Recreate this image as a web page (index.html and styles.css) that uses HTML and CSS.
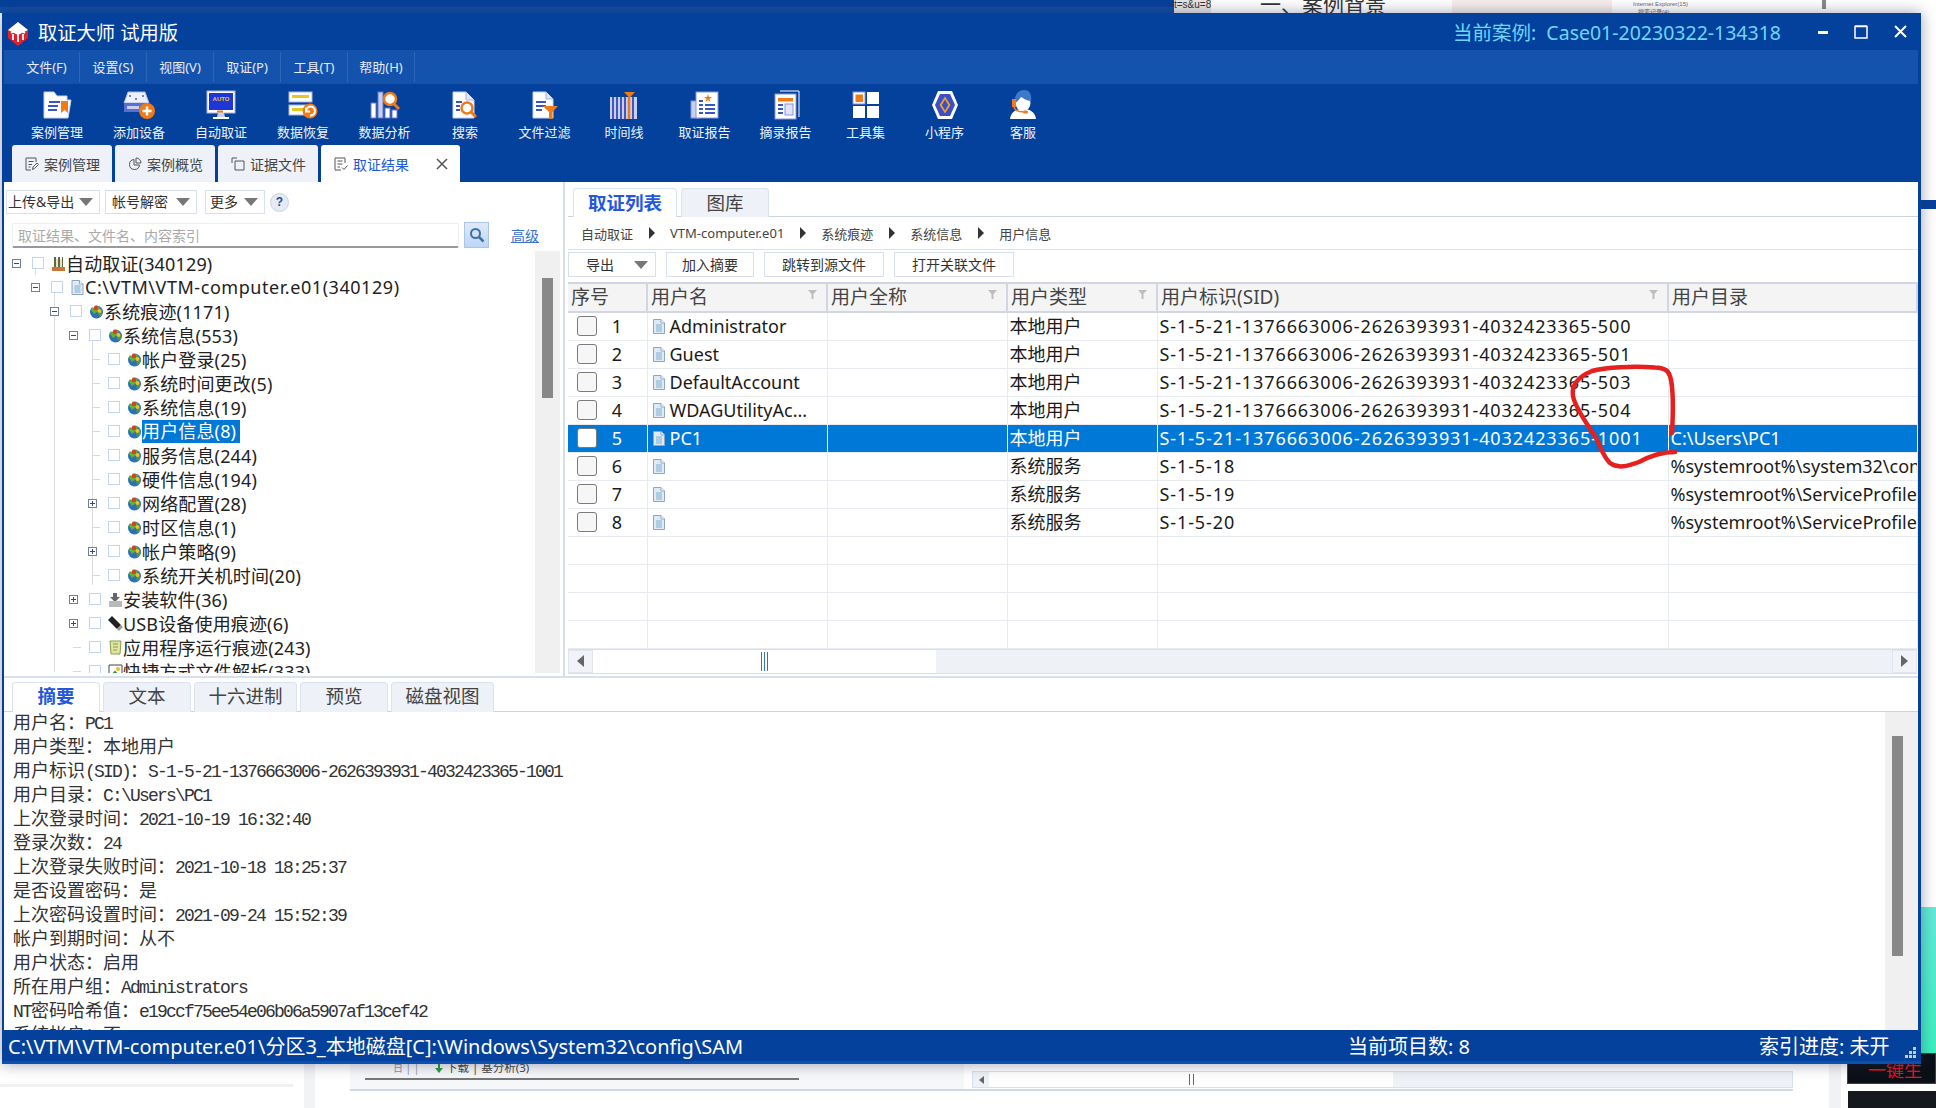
FILE: index.html
```html
<!DOCTYPE html>
<html lang="zh-CN">
<head>
<meta charset="utf-8">
<title>取证大师 试用版</title>
<link rel="stylesheet" href="styles.css">
</head>
<body>
<svg class="defs" width="0" height="0" aria-hidden="true">
  <symbol id="globe" viewBox="0 0 15 15">
    <circle cx="7.5" cy="8" r="6.5" fill="#2f6fb8"/>
    <path d="M2 6 C4 2 8 1 11 3 L9 7 L5 10 Z" fill="#5cb531"/>
    <path d="M9 9 L13 7 L13 11 L10 13 Z" fill="#3fa044"/>
    <circle cx="7" cy="4" r="2.3" fill="#e23a2a"/>
    <circle cx="10.5" cy="7" r="2" fill="#f4c020"/>
    <circle cx="4" cy="2.5" r="1.2" fill="#fff"/>
  </symbol>
  <symbol id="file" viewBox="0 0 12 15">
    <path d="M.5.5H8L11.500 4V14.500H.5Z" fill="#dfeaf6" stroke="#8fa6c2"/>
    <path d="M8 .5V4H11.500" fill="#fff" stroke="#8fa6c2"/>
    <path d="M3 6H9M3 8H9M3 10H9M3 12H9" stroke="#7fb0cf"/>
  </symbol>
  <symbol id="funnel" viewBox="0 0 9 9">
    <path d="M0 0H9L5.500 4V9H3.500V4Z" fill="#bdbdbd"/>
  </symbol>
</svg>

<main class="desktop">
  <div class="bg-blue"></div>
  <div class="bg-url">t=s&amp;u=8</div>
  <div class="bg-heading">一、案例背景</div>
  <div class="bg-pink"></div>
  <div class="bg-tree">Internet Explorer(15)<br>&nbsp;&nbsp;&nbsp;搜索记录(4)</div>
  <div class="bg-sb"></div>
  <div class="bg-tick"></div>
  <div class="bg-grey-bar"></div>
  <div class="bg-vband"></div>
  <div class="bg-panel">
    <span class="bg-cal">日 | |</span>
    <svg class="bg-arrow" width="8" height="9" viewBox="0 0 8 9"><path d="M3 0H5V4H8L4 9L0 4H3Z" fill="#2a9a3a"/></svg>
    <span class="bg-dl">下载 | 基分析(3)</span>
    <span class="bg-line"></span>
  </div>
  <div class="bg-hs"><span class="bg-hs-btn"><i class="tl-sm"></i></span><span class="bg-hs-thumb"><i class="grip-sm"></i></span></div>
  <div class="bg-hs-line"></div>
  <div class="bg-vband2"></div>
  <div class="bg-teal"></div>
  <div class="bg-dark1"><span class="bg-red">一键生</span></div>
  <div class="bg-dark2"></div>

  <section class="window">
    <header class="titlebar">
      <svg class="logo" width="20" height="24" viewBox="0 0 20 24">
        <path d="M10 0 L20 8 V16 L10 24 L0 16 V8Z" fill="#e3202a"/>
        <path d="M10 0 L20 8 L10 13 L0 8Z" fill="#fff"/>
        <path d="M3 11 L10 7 L17 11 M5 12 V18 M10 10 V20 M15 12 V18" stroke="#fff" stroke-width="1.800" fill="none"/>
      </svg>
      <span class="app-name">取证大师 试用版</span>
      <span class="case-name">当前案例:&nbsp;&nbsp;Case01-20230322-134318</span>
      <span class="win-btns">
        <svg width="10" height="4" viewBox="0 0 10 4"><rect width="10" height="3" y="1" fill="#fff"/></svg>
        <svg width="14" height="14" viewBox="0 0 14 14"><path d="M1 1.500H13V13H1Z M1 1H13" fill="none" stroke="#fff" stroke-width="1.500"/></svg>
        <svg width="13" height="13" viewBox="0 0 13 13"><path d="M1 1L12 12M12 1L1 12" stroke="#fff" stroke-width="2"/></svg>
      </span>
    </header>

    <nav class="menubar">
      <span class="menu-item first">文件(F)</span>
      <span class="menu-item">设置(S)</span>
      <span class="menu-item">视图(V)</span>
      <span class="menu-item">取证(P)</span>
      <span class="menu-item">工具(T)</span>
      <span class="menu-item">帮助(H)</span>
    </nav>

    <div class="toolbar">
      <div class="tool">
        <svg width="32" height="28" viewBox="0 0 32 28"><path d="M3 1H13L16 5H26V9H30L27 27H3Z" fill="#fff" stroke="#c7d0f0"/><path d="M8 11H19M7 15H17M7 19H16" stroke="#3a55c8" stroke-width="2"/><path d="M20 10H27V22L23.500 19L20 22Z" fill="#f47a14"/></svg>
        <span>案例管理</span>
      </div>
      <div class="tool">
        <svg width="32" height="28" viewBox="0 0 32 28"><path d="M5 1H22L26 12H1Z" fill="#eef1fa" stroke="#aab4e0"/><circle cx="7" cy="5" r="1" fill="#4a5cc8"/><circle cx="20" cy="5" r="1" fill="#4a5cc8"/><circle cx="13" cy="8" r="1" fill="#4a5cc8"/><rect x="1" y="12" width="25" height="9" fill="#5b6fd0"/><rect x="4" y="15" width="12" height="3" fill="#c7d0f0"/><circle cx="24" cy="20" r="8" fill="#f07a18"/><path d="M24 15.500V24.500M19.500 20H28.500" stroke="#fff" stroke-width="2.500"/></svg>
        <span>添加设备</span>
      </div>
      <div class="tool">
        <svg width="32" height="30" viewBox="0 0 32 30"><rect x="2" y="1" width="28" height="22" fill="#fff" stroke="#aab4e0"/><rect x="4" y="3" width="24" height="17" fill="#1e35d8"/><text class="auto" x="16" y="11">AUTO</text><rect x="12" y="20.500" width="6" height="2" fill="#f07a18"/><path d="M13 23H19L20 27H12Z" fill="#c7d0f0"/><rect x="8" y="27" width="16" height="2" fill="#fff"/></svg>
        <span>自动取证</span>
      </div>
      <div class="tool">
        <svg width="32" height="28" viewBox="0 0 32 28"><rect x="2" y="1" width="23" height="10" fill="#fff" stroke="#aab4e0"/><rect x="5" y="4" width="17" height="3" fill="#e8c820"/><rect x="2" y="14" width="23" height="10" fill="#fff" stroke="#aab4e0"/><rect x="5" y="17" width="12" height="3" fill="#e8c820"/><circle cx="23" cy="20" r="7.500" fill="#f07a18"/><path d="M19 20 A4.500 4.500 0 1 1 23 24.500 M19 16.500V20.500H23" stroke="#fff" stroke-width="2" fill="none"/></svg>
        <span>数据恢复</span>
      </div>
      <div class="tool">
        <svg width="32" height="28" viewBox="0 0 32 28"><rect x="2" y="12" width="5" height="15" fill="#fff" stroke="#6a78d0"/><rect x="9" y="1" width="5" height="26" fill="#c7d0f0" stroke="#6a78d0"/><rect x="16" y="17" width="5" height="10" fill="#fff" stroke="#6a78d0"/><rect x="23" y="19" width="5" height="8" fill="#fff" stroke="#6a78d0"/><circle cx="21" cy="8" r="6" fill="#fff" stroke="#f07a18" stroke-width="2.500"/><path d="M25 13L30 18" stroke="#f07a18" stroke-width="3"/></svg>
        <span>数据分析</span>
      </div>
      <div class="tool">
        <svg width="32" height="28" viewBox="0 0 32 28"><path d="M4 1H17L25 9V27H4Z" fill="#fff" stroke="#c7d0f0"/><path d="M17 1V9H25" fill="#dfe4f8" stroke="#aab4e0"/><path d="M7 11H13M7 15H11M7 19H11" stroke="#3a55c8" stroke-width="2"/><circle cx="18" cy="17" r="5.500" fill="#fff" stroke="#f07a18" stroke-width="2.500"/><path d="M22 21L27 26" stroke="#f07a18" stroke-width="3"/></svg>
        <span>搜索</span>
      </div>
      <div class="tool">
        <svg width="32" height="28" viewBox="0 0 32 28"><path d="M4 1H17L24 8V27H4Z" fill="#fff" stroke="#c7d0f0"/><path d="M17 1V8H24" fill="#dfe4f8" stroke="#aab4e0"/><path d="M7 11H17M7 15H17M7 19H13" stroke="#3a55c8" stroke-width="2"/><path d="M14 15H29L23.500 21V28H20V21Z" fill="#f07a18"/></svg>
        <span>文件过滤</span>
      </div>
      <div class="tool">
        <svg width="32" height="28" viewBox="0 0 32 28"><rect x="2" y="6" width="27" height="22" fill="#c7d0f0"/><path d="M5 6V28M9 6V28M13 6V28M17 6V28M25 6V28" stroke="#4455c0" stroke-width="2"/><path d="M21 6V28" stroke="#f07a18" stroke-width="2.500"/><path d="M16 1H27L21.500 7Z" fill="#f07a18"/></svg>
        <span>时间线</span>
      </div>
      <div class="tool">
        <svg width="32" height="28" viewBox="0 0 32 28"><rect x="2" y="10" width="8" height="17" fill="#c7d0f0" stroke="#8a96d8"/><rect x="7" y="1" width="22" height="26" fill="#fff" stroke="#8a96d8"/><path d="M19 3L20 6H23L20.500 8L21.500 11L19 9L16.500 11L17.500 8L15 6H18Z" fill="#f07a18"/><path d="M10 10H14M10 14H14M10 18H14M10 22H14M16 14H26M16 18H26M16 22H26" stroke="#3a55c8" stroke-width="2"/></svg>
        <span>取证报告</span>
      </div>
      <div class="tool">
        <svg width="32" height="30" viewBox="0 0 32 30"><path d="M10 1H29V27" fill="none" stroke="#fff"/><rect x="5" y="4" width="21" height="25" fill="#fff" stroke="#8a96d8"/><rect x="8" y="8" width="15" height="3.500" fill="#f07a18"/><path d="M8 15H13M8 19H13M8 23H13" stroke="#3a55c8" stroke-width="2"/><rect x="15" y="14" width="8" height="11" fill="#dfe4f8" stroke="#8a96d8"/></svg>
        <span>摘录报告</span>
      </div>
      <div class="tool">
        <svg width="28" height="28" viewBox="0 0 28 28"><rect x="1" y="1" width="12" height="12" fill="#fff" stroke="#8a96d8"/><rect x="3.500" y="3.500" width="7.500" height="7.500" fill="#f07a18"/><rect x="15" y="1" width="12" height="12" fill="#fff"/><rect x="1" y="15" width="12" height="12" fill="#fff"/><rect x="15" y="15" width="12" height="12" fill="#fff"/></svg>
        <span>工具集</span>
      </div>
      <div class="tool">
        <svg width="28" height="30" viewBox="0 0 28 30"><path d="M7 1H21L27 15L21 29H7L1 15Z" fill="#fff"/><path d="M9 4H19L24 15L19 26H9L4 15Z" fill="#3a4fc8"/><path d="M14 8L18.500 15L14 22L9.500 15Z" fill="none" stroke="#f5a020" stroke-width="1.600"/><path d="M12 11.500L10 15L12 18.500M16 11.500L18 15L16 18.500" fill="none" stroke="#f5a020" stroke-width="1.200"/></svg>
        <span>小程序</span>
      </div>
      <div class="tool">
        <svg width="28" height="30" viewBox="0 0 28 30"><path d="M1 29C2 22 7 19 14 19C21 19 26 22 27 29Z" fill="#fff"/><ellipse cx="14" cy="13" rx="7.500" ry="8" fill="#fff"/><path d="M6 13C5 4 10 0 15 0C21 0 23 5 22 11C18 11 14 8 12 7C10 10 8 12 6 13Z" fill="#3f78c8"/><rect x="3" y="9" width="4" height="8" fill="#f07a18"/><path d="M5 17C6 21 10 22 15 22" stroke="#f07a18" stroke-width="1.500" fill="none"/><rect x="14" y="20.500" width="5" height="3" rx="1.500" fill="#f07a18"/></svg>
        <span>客服</span>
      </div>
    </div>

    <div class="tabbar">
      <span class="top-tab">
        <svg width="14" height="14" viewBox="0 0 14 14"><path d="M11 5V1H1V13H6M3.500 4.500H8.500M3.500 7.500H7M3.500 10H5.500M7.500 12.500L8 10L12 6L13.500 7.500L9.500 11.500Z" fill="none" stroke="#555"/></svg>
        案例管理
      </span>
      <span class="top-tab">
        <svg width="14" height="14" viewBox="0 0 14 14"><path d="M6 2.500A5 5 0 1 0 11.500 8H6Z M8 1A5 5 0 0 1 13 6H8Z" fill="none" stroke="#555"/></svg>
        案例概览
      </span>
      <span class="top-tab">
        <svg width="14" height="14" viewBox="0 0 14 14"><path d="M1 6V1H6M4 4H13V13H4Z" fill="none" stroke="#555"/></svg>
        证据文件
      </span>
      <span class="top-tab active">
        <svg width="14" height="14" viewBox="0 0 14 14"><path d="M7 13H1V1H11V6M3.500 4H8.500M3.500 7H8.500M3.500 10H6M8 10.500L10 12.500L13.500 8.500" fill="none" stroke="#555"/></svg>
        <span class="tab-label">取证结果</span>
        <svg class="tab-close" width="12" height="12" viewBox="0 0 12 12"><path d="M1 1L11 11M11 1L1 11" stroke="#555" stroke-width="1.500"/></svg>
      </span>
    </div>

    <div class="main">
      <aside class="left">
        <div class="left-tools">
          <span class="drop w1">上传&amp;导出<i class="tri"></i></span>
          <span class="drop w2">帐号解密<i class="tri"></i></span>
          <span class="drop w3">更多<i class="tri"></i></span>
          <span class="help">?</span>
        </div>
        <div class="search-row">
          <span class="search-input">取证结果、文件名、内容索引</span>
          <span class="search-btn">
            <svg width="16" height="16" viewBox="0 0 16 16"><circle cx="6.500" cy="6.500" r="4.500" fill="none" stroke="#3f6fa8" stroke-width="2"/><path d="M10 10L14.500 14.500" stroke="#3f6fa8" stroke-width="2.500"/></svg>
          </span>
          <span class="adv">高级</span>
        </div>
        <div class="tree-wrap">
          <div class="tree">
            <i class="guide g1"></i><i class="guide g2"></i><i class="guide g3"></i><i class="guide g4"></i>
            <div class="node l0"><i class="exp minus"></i><i class="chk"></i>
              <svg class="nico" width="15" height="15" viewBox="0 0 15 15"><path d="M1 11H14V15H1Z" fill="#c8763a"/><path d="M3 1H5V11H3ZM7 1H9V11H7ZM11 1H12V11H11Z" fill="#5d6b3a"/><path d="M5 3H7V11H5ZM9 3H11V11H9Z" fill="#e8e4c8"/></svg>
              <span>自动取证(340129)</span></div>
            <div class="node l1"><i class="exp minus"></i><i class="chk"></i>
              <svg class="nico"><use href="#file"/></svg>
              <span class="wide">C:\VTM\VTM-computer.e01(340129)</span></div>
            <div class="node l2"><i class="exp minus"></i><i class="chk"></i>
              <svg class="nico"><use href="#globe"/></svg>
              <span>系统痕迹(1171)</span></div>
            <div class="node l3"><i class="exp minus"></i><i class="chk"></i>
              <svg class="nico"><use href="#globe"/></svg>
              <span>系统信息(553)</span></div>
            <div class="node l4"><i class="exp leaf"></i><i class="chk"></i>
              <svg class="nico"><use href="#globe"/></svg>
              <span>帐户登录(25)</span></div>
            <div class="node l4"><i class="exp leaf"></i><i class="chk"></i>
              <svg class="nico"><use href="#globe"/></svg>
              <span>系统时间更改(5)</span></div>
            <div class="node l4"><i class="exp leaf"></i><i class="chk"></i>
              <svg class="nico"><use href="#globe"/></svg>
              <span>系统信息(19)</span></div>
            <div class="node l4"><i class="exp leaf"></i><i class="chk"></i>
              <svg class="nico"><use href="#globe"/></svg>
              <span class="sel">用户信息(8)</span></div>
            <div class="node l4"><i class="exp leaf"></i><i class="chk"></i>
              <svg class="nico"><use href="#globe"/></svg>
              <span>服务信息(244)</span></div>
            <div class="node l4"><i class="exp leaf"></i><i class="chk"></i>
              <svg class="nico"><use href="#globe"/></svg>
              <span>硬件信息(194)</span></div>
            <div class="node l4"><i class="exp plus"></i><i class="chk"></i>
              <svg class="nico"><use href="#globe"/></svg>
              <span>网络配置(28)</span></div>
            <div class="node l4"><i class="exp leaf"></i><i class="chk"></i>
              <svg class="nico"><use href="#globe"/></svg>
              <span>时区信息(1)</span></div>
            <div class="node l4"><i class="exp plus"></i><i class="chk"></i>
              <svg class="nico"><use href="#globe"/></svg>
              <span>帐户策略(9)</span></div>
            <div class="node l4"><i class="exp leaf"></i><i class="chk"></i>
              <svg class="nico"><use href="#globe"/></svg>
              <span>系统开关机时间(20)</span></div>
            <div class="node l3"><i class="exp plus"></i><i class="chk"></i>
              <svg class="nico" width="15" height="15" viewBox="0 0 15 15"><path d="M5 1H9V5H12L7 10L2 5H5Z" fill="#666"/><path d="M1 9H14V15H1Z" fill="#b9b9b9"/></svg>
              <span>安装软件(36)</span></div>
            <div class="node l3"><i class="exp plus"></i><i class="chk"></i>
              <svg class="nico" width="15" height="15" viewBox="0 0 15 15"><path d="M0 4L4 0L13 9L9 13Z" fill="#222"/><path d="M9 13L13 9L15 11L11 15Z" fill="#999"/></svg>
              <span>USB设备使用痕迹(6)</span></div>
            <div class="node l3"><i class="exp leaf"></i><i class="chk"></i>
              <svg class="nico" width="15" height="15" viewBox="0 0 15 15"><path d="M2 1H13L12 14H3Z" fill="#dfe6a0" stroke="#8a9a50"/><path d="M5 4H10M5 7H10M5 10H9" stroke="#8a9a50"/></svg>
              <span>应用程序运行痕迹(243)</span></div>
            <div class="node l3"><i class="exp leaf"></i><i class="chk"></i>
              <svg class="nico" width="15" height="15" viewBox="0 0 15 15"><path d="M1 1H14V14H1Z" fill="#fff" stroke="#444"/><path d="M3 12L7 8L10 11" stroke="#3a9a3a" stroke-width="2" fill="none"/><circle cx="10" cy="5" r="2" fill="#e8c020"/></svg>
              <span>快捷方式文件解析(333)</span></div>
          </div>
          <div class="vscroll"><i class="vthumb"></i></div>
        </div>
      </aside>

      <section class="right">
        <div class="sub-tabs">
          <span class="sub-tab active">取证列表</span>
          <span class="sub-tab">图库</span>
        </div>
        <div class="crumbs">
          <span>自动取证</span><i class="arrow"></i>
          <span>VTM-computer.e01</span><i class="arrow"></i>
          <span>系统痕迹</span><i class="arrow"></i>
          <span>系统信息</span><i class="arrow"></i>
          <span>用户信息</span>
        </div>
        <div class="actions">
          <span class="act export">导出<i class="tri"></i></span>
          <span class="act a2">加入摘要</span>
          <span class="act a3">跳转到源文件</span>
          <span class="act a3">打开关联文件</span>
        </div>
        <table class="grid">
          <colgroup><col class="c1"><col class="c2"><col class="c3"><col class="c4"><col class="c5"><col class="c6"></colgroup>
          <thead>
            <tr>
              <th>序号</th>
              <th><div class="th-in">用户名<svg width="9" height="9"><use href="#funnel"/></svg></div></th>
              <th><div class="th-in">用户全称<svg width="9" height="9"><use href="#funnel"/></svg></div></th>
              <th><div class="th-in">用户类型<svg width="9" height="9"><use href="#funnel"/></svg></div></th>
              <th><div class="th-in">用户标识(SID)<svg width="9" height="9"><use href="#funnel"/></svg></div></th>
              <th>用户目录</th>
            </tr>
          </thead>
          <tbody>
            <tr><td><div class="idx"><i class="rowchk"></i><b>1</b></div></td><td><div class="name"><svg width="12" height="15"><use href="#file"/></svg>Administrator</div></td><td></td><td>本地用户</td><td class="sid">S-1-5-21-1376663006-2626393931-4032423365-500</td><td></td></tr>
            <tr><td><div class="idx"><i class="rowchk"></i><b>2</b></div></td><td><div class="name"><svg width="12" height="15"><use href="#file"/></svg>Guest</div></td><td></td><td>本地用户</td><td class="sid">S-1-5-21-1376663006-2626393931-4032423365-501</td><td></td></tr>
            <tr><td><div class="idx"><i class="rowchk"></i><b>3</b></div></td><td><div class="name"><svg width="12" height="15"><use href="#file"/></svg>DefaultAccount</div></td><td></td><td>本地用户</td><td class="sid">S-1-5-21-1376663006-2626393931-4032423365-503</td><td></td></tr>
            <tr><td><div class="idx"><i class="rowchk"></i><b>4</b></div></td><td><div class="name"><svg width="12" height="15"><use href="#file"/></svg>WDAGUtilityAc...</div></td><td></td><td>本地用户</td><td class="sid">S-1-5-21-1376663006-2626393931-4032423365-504</td><td></td></tr>
            <tr class="picked"><td><div class="idx"><i class="rowchk"></i><b>5</b></div></td><td><div class="name"><svg width="12" height="15"><use href="#file"/></svg>PC1</div></td><td></td><td>本地用户</td><td class="sid">S-1-5-21-1376663006-2626393931-4032423365-1001</td><td>C:\Users\PC1</td></tr>
            <tr><td><div class="idx"><i class="rowchk"></i><b>6</b></div></td><td><div class="name"><svg width="12" height="15"><use href="#file"/></svg></div></td><td></td><td>系统服务</td><td class="sid">S-1-5-18</td><td>%systemroot%\system32\config\systemprofile</td></tr>
            <tr><td><div class="idx"><i class="rowchk"></i><b>7</b></div></td><td><div class="name"><svg width="12" height="15"><use href="#file"/></svg></div></td><td></td><td>系统服务</td><td class="sid">S-1-5-19</td><td>%systemroot%\ServiceProfiles\LocalService</td></tr>
            <tr><td><div class="idx"><i class="rowchk"></i><b>8</b></div></td><td><div class="name"><svg width="12" height="15"><use href="#file"/></svg></div></td><td></td><td>系统服务</td><td class="sid">S-1-5-20</td><td>%systemroot%\ServiceProfiles\NetworkService</td></tr>
            <tr><td></td><td></td><td></td><td></td><td></td><td></td></tr>
            <tr><td></td><td></td><td></td><td></td><td></td><td></td></tr>
            <tr><td></td><td></td><td></td><td></td><td></td><td></td></tr>
            <tr><td></td><td></td><td></td><td></td><td></td><td></td></tr>
          </tbody>
        </table>
        <div class="hscroll">
          <span class="hbtn"><i class="tl"></i></span>
          <span class="hthumb"><i class="grip"></i></span>
          <span class="htrack"></span>
          <span class="hbtn"><i class="tr"></i></span>
        </div>
      </section>
    </div>

    <div class="bottom">
      <div class="btm-tabs">
        <span class="btm-tab t1 active">摘要</span>
        <span class="btm-tab t1">文本</span>
        <span class="btm-tab t2">十六进制</span>
        <span class="btm-tab t1">预览</span>
        <span class="btm-tab t2">磁盘视图</span>
      </div>
      <div class="btm-body">
        <div class="summary">
          <div>用户名：<span class="lat">PC1</span></div>
          <div>用户类型：本地用户</div>
          <div>用户标识<span class="lat">(SID)</span>：<span class="lat">S-1-5-21-1376663006-2626393931-4032423365-1001</span></div>
          <div>用户目录：<span class="lat">C:\Users\PC1</span></div>
          <div>上次登录时间：<span class="lat">2021-10-19 16:32:40</span></div>
          <div>登录次数：<span class="lat">24</span></div>
          <div>上次登录失败时间：<span class="lat">2021-10-18 18:25:37</span></div>
          <div>是否设置密码：是</div>
          <div>上次密码设置时间：<span class="lat">2021-09-24 15:52:39</span></div>
          <div>帐户到期时间：从不</div>
          <div>用户状态：启用</div>
          <div>所在用户组：<span class="lat">Administrators</span></div>
          <div><span class="lat">NT</span>密码哈希值：<span class="lat">e19ccf75ee54e06b06a5907af13cef42</span></div>
          <div>系统帐户：否</div>
        </div>
        <div class="btm-scroll"><i class="btm-thumb"></i></div>
      </div>
    </div>

    <footer class="status">
      <span class="st-path">C:\VTM\VTM-computer.e01\分区3_本地磁盘[C]:\Windows\System32\config\SAM</span>
      <span class="st-count">当前项目数: 8</span>
      <span class="st-index">索引进度: 未开始</span>
      <span class="st-grip">
        <i></i><i></i><i></i><i></i><i></i><i></i>
      </span>
    </footer>
  </section>

  <svg class="scribble" width="130" height="115" viewBox="0 0 130 115">
    <path d="M112 73C113 55 114 35 111 20C109 10 105 8 95 7.500C75 6 45 7 32 11C20 16 11 24 13 36C15 48 28 65 36 78C41 88 44 98 50 103C58 109 68 106 79 102C90 96 100 92 115 92" fill="none" stroke="#e6201f" stroke-width="4.500" stroke-linecap="round"/>
  </svg>
</main>
</body>
</html>
```

FILE: styles.css
```css
* { box-sizing: border-box; }
html, body { margin: 0; padding: 0; background: #fff; }
body { font-family: "Noto Sans", "Noto Sans CJK SC", sans-serif; color: #222; overflow: hidden; }
i { display: block; font-style: normal; }
.defs { position: absolute; }

.desktop { position: relative; width: 1936px; height: 1108px; overflow: hidden; background: #fff; }

/* other windows showing behind the app */
.bg-blue { position: absolute; left: 0; top: 0; width: 1174px; height: 13px; background: linear-gradient(#07409a 0, #07409a 7px, #0e4ca6 7px, #0e4ca6 13px); }
.bg-url { position: absolute; left: 1174px; top: 0; width: 37px; height: 13px; background: #e6e6e6; font: 10px/9px "Liberation Sans", sans-serif; color: #333; overflow: hidden; }
.bg-heading { position: absolute; left: 1260px; top: -7px; font-size: 21px; line-height: 22px; color: #333; white-space: nowrap; }
.bg-pink { position: absolute; left: 1452px; top: 0; width: 160px; height: 13px; background: #f6eeeb; }
.bg-tree { position: absolute; left: 1633px; top: 0; font: 6px/8px "Liberation Sans", "Noto Sans CJK SC", sans-serif; color: #667; height: 13px; overflow: hidden; }
.bg-sb { position: absolute; left: 1822px; top: 0; width: 4px; height: 9px; background: #888; }
.bg-tick { position: absolute; left: 1921px; top: 200px; width: 15px; height: 9px; background: #07409a; }
.bg-grey-bar { position: absolute; left: 0; top: 1084px; width: 293px; height: 3px; background: #f0f0f0; }
.bg-vband { position: absolute; left: 304px; top: 1064px; width: 11px; height: 44px; background: #f2f3f5; }
.bg-panel { position: absolute; left: 350px; top: 1064px; width: 614px; height: 26px; background: #f6f7f9; }
.bg-cal { position: absolute; left: 43px; top: -2px; font-size: 10px; line-height: 12px; color: #8a94a8; white-space: nowrap; }
.bg-arrow { position: absolute; left: 85px; top: 0; }
.bg-dl { position: absolute; left: 96px; top: -2px; font-size: 11.500px; line-height: 12px; color: #444; white-space: nowrap; }
.bg-line { position: absolute; left: 15px; top: 14px; width: 434px; height: 2px; background: #777; display: block; }
.bg-hs { position: absolute; left: 972px; top: 1071px; width: 821px; height: 17px; background: #eef1f6; border: 1px solid #d8e0f0; display: flex; }
.bg-hs-btn { width: 16px; display: flex; align-items: center; justify-content: center; }
.tl-sm { width: 0; height: 0; border-top: 4px solid transparent; border-bottom: 4px solid transparent; border-right: 5px solid #666; }
.bg-hs-thumb { width: 404px; height: 15px; background: #fff; display: flex; align-items: center; justify-content: center; }
.grip-sm { width: 5px; height: 11px; border-left: 1px solid #3a70c0; border-right: 1px solid #3a70c0; }
.bg-hs-line { position: absolute; left: 350px; top: 1089px; width: 1443px; height: 2px; background: #d0d8e8; }
.bg-vband2 { position: absolute; left: 1829px; top: 1064px; width: 12px; height: 44px; background: #f1f2f4; }
.bg-teal { position: absolute; left: 1921px; top: 907px; width: 15px; height: 148px; background: linear-gradient(#62ead8, #3cf0c0); }
.bg-dark1 { position: absolute; left: 1847px; top: 1053px; width: 89px; height: 31px; background: #0b0f16; border: 1px solid #b0101a; overflow: hidden; }
.bg-red { position: absolute; left: 20px; top: 5px; color: #f01020; font-size: 18px; line-height: 22px; white-space: nowrap; }
.bg-dark2 { position: absolute; left: 1848px; top: 1091px; width: 88px; height: 17px; background: #15181c; }

/* app window */
.window { position: absolute; left: 2px; top: 13px; width: 1919px; height: 1051px; background: #03419d; display: flex; flex-direction: column; box-shadow: 0 0 14px rgba(40, 50, 80, .45); }

.titlebar { height: 37px; display: flex; align-items: center; color: #fff; padding-left: 6px; }
.logo { margin-right: 10px; margin-top: 4px; }
.app-name { font-size: 19.300px; }
.case-name { margin-left: auto; font-size: 19.500px; color: #6fd6fb; }
.win-btns { display: flex; align-items: center; width: 140px; padding-left: 37px; gap: 26px; }

.menubar { height: 34px; margin: 0 3px 0 2px; background: #1453ad; display: flex; align-items: center; }
.menu-item { width: 67px; height: 30px; line-height: 30px; font-size: 13px; color: #e4ecf8; text-align: center; border-right: 1px solid #2c66b8; }
.menu-item.first { width: 76px; padding-left: 10px; }

.toolbar { height: 61px; padding-left: 14px; padding-top: 6px; display: grid; grid-template-columns: 82px 82px 82px 82px 81px 80px 79px 80px 81px 81px 79px 79px 78px; justify-content: start; }
.tool { display: flex; flex-direction: column; align-items: center; color: #eef3fb; font-size: 13px; line-height: 18px; }
.tool svg { height: 30px; flex: none; margin-bottom: 3px; }
.auto { font: bold 6px "Liberation Sans", sans-serif; fill: #f0d020; text-anchor: middle; }

.tabbar { height: 37px; padding-left: 10px; display: flex; gap: 3px; align-items: flex-end; }
.top-tab { width: 100px; height: 37px; background: #eef1f7; border-radius: 3px 3px 0 0; display: flex; align-items: center; gap: 5px; padding-left: 13px; font-size: 14px; color: #444; }
.top-tab.active { width: 139px; background: #fff; padding-right: 10px; }
.tab-label { color: #2458dc; }
.tab-close { margin-left: auto; margin-right: 2px; }

.main { height: 496px; margin: 0 3px 0 2px; background: #fff; display: flex; border-bottom: 2px solid #d8e0f0; border-top: 0; }

.left { width: 558px; flex: none; display: flex; flex-direction: column; }
.left-tools { display: flex; align-items: center; gap: 5px; padding: 8px 0 0 2px; height: 32px; }
.drop { height: 24px; border: 1px solid #d4dff0; font-size: 14px; line-height: 22px; color: #333; padding-left: 1px; display: flex; align-items: center; justify-content: space-between; padding-right: 6px; }
.drop.w1 { width: 94px; }
.drop.w2 { width: 92px; padding-left: 6px; margin-left: 0; }
.drop.w3 { width: 60px; padding-left: 4px; margin-left: 3px; }
.tri { width: 0; height: 0; border-left: 7px solid transparent; border-right: 7px solid transparent; border-top: 8px solid #777; }
.help { width: 19px; height: 19px; border-radius: 50%; background: #e4ebf6; border: 1px solid #c6d2e6; font: bold 12px/17px "Liberation Sans", sans-serif; text-align: center; color: #2a4a90; }
.search-row { display: flex; align-items: center; padding-left: 8px; margin-top: 8px; height: 26px; }
.search-input { width: 447px; height: 25px; border: 1px solid #eee; border-bottom: 2px solid #999; border-radius: 2px; font-size: 14px; line-height: 23px; padding-left: 5px; color: #aaa; }
.search-btn { width: 25px; height: 26px; margin-left: 5px; background: linear-gradient(#dfeafa, #bdd6f5); border: 1px solid #a9c6ea; display: flex; align-items: center; justify-content: center; }
.adv { margin-left: 22px; font-size: 14px; color: #3a70cc; text-decoration: underline; }

.tree-wrap { display: flex; margin-top: 3px; height: 423px; }
.tree { position: relative; width: 531px; height: 422px; overflow: hidden; }
.node { height: 24px; display: flex; align-items: center; font-size: 18px; white-space: nowrap; color: #222; position: relative; }
.node span { letter-spacing: .15px; }
.node .wide { letter-spacing: .55px; }
.l0 { padding-left: 8px; }
.l1 { padding-left: 27px; }
.l2 { padding-left: 46px; }
.l3 { padding-left: 65px; }
.l4 { padding-left: 84px; }
.exp { width: 9px; height: 9px; flex: none; margin-right: 11px; position: relative; border: 1px solid #6f7f9f; background: #fff; }
.exp::before { content: ""; position: absolute; left: 1px; top: 3px; width: 5px; height: 1px; background: #33477a; }
.exp.plus::after { content: ""; position: absolute; left: 3px; top: 1px; width: 1px; height: 5px; background: #33477a; }
.exp.leaf { border: 0; height: 1px; background: transparent; }
.exp.leaf::before { left: 4px; top: 0; width: 8px; background: #d8d8d8; }
.chk { width: 12px; height: 12px; flex: none; border: 1px solid #c4d4f4; background: #fff; margin-right: 7px; }
.nico { width: 15px; height: 15px; flex: none; margin-right: 0; }
.sel { background: #0078d7; color: #fff; height: 23px; line-height: 23px; padding-right: 4px; }
.guide { position: absolute; width: 1px; background: #dcdcdc; }
.g1 { left: 31px; top: 12px; height: 12px; }
.g2 { left: 50px; top: 36px; height: 12px; }
.g3 { left: 50px; top: 48px; height: 373px; }
.g4 { left: 88px; top: 84px; height: 250px; }
.vscroll { width: 25px; margin-left: 0; height: 422px; background: #f0f0f0; padding: 27px 7px 0; }
.vthumb { width: 11px; height: 120px; background: #888; }

.right { flex: 1; min-width: 0; border-left: 2px solid #d6dff0; margin-left: 1px; padding-left: 3px; }
.sub-tabs { display: flex; gap: 4px; padding: 6px 0 0 5px; height: 35px; border-bottom: 1px solid #ccd2e0; }
.sub-tab { height: 29px; width: 88px; background: #eef1f7; border: 1px solid #dbe2f0; border-bottom: 0; border-radius: 4px 4px 0 0; text-align: center; font-size: 18.500px; line-height: 27px; color: #444; }
.sub-tab.active { width: 104px; background: #fff; color: #2458dc; font-weight: 700; }
.crumbs { height: 33px; display: flex; align-items: center; gap: 14px; padding-left: 13px; font-size: 13px; color: #444; border-bottom: 1px solid #d9e2f0; white-space: nowrap; }
.arrow { width: 0; height: 0; border-top: 6px solid transparent; border-bottom: 6px solid transparent; border-left: 6px solid #333; margin: 0 1px 0 2px; }
.actions { display: flex; gap: 10px; padding-top: 2px; height: 27px; font-size: 14px; color: #333; }
.act { height: 25px; border: 1px solid #d6e0f0; display: flex; align-items: center; justify-content: center; line-height: 23px; }
.act.export { width: 88px; justify-content: space-between; padding: 0 7px 0 17px; }
.act.a2 { width: 88px; }
.act.a3 { width: 120px; }

.grid { margin-top: 5px; width: 1349px; table-layout: fixed; border-collapse: collapse; font-size: 18px; }
.c1 { width: 79px; }
.c2 { width: 180px; }
.c3 { width: 180px; }
.c4 { width: 150px; }
.c5 { width: 511px; }
.c6 { width: 249px; }
.grid th { height: 29px; background: #f4f4f4; border-top: 2px solid #d2d6e2; border-bottom: 2px solid #d2d6e2; border-right: 2px solid #d2d6e2; font-weight: 400; font-size: 19px; text-align: left; padding: 0 0 1px 3px; color: #444; white-space: nowrap; overflow: hidden; line-height: 22px; }
.th-in { display: flex; align-items: center; justify-content: space-between; padding-right: 9px; }
.th-in svg { margin-top: -6px; }
.grid td { height: 28px; padding: 0 0 0 2px; border-right: 1px solid #e8eaf2; border-bottom: 1px solid #e8eaf2; white-space: nowrap; overflow: hidden; line-height: 24px; color: #1a1a1a; }
.idx { display: flex; align-items: center; padding-left: 7px; }
.idx b { font-weight: 400; width: 22px; margin-left: 9px; text-align: center; }
.rowchk { width: 20px; height: 20px; border: 1px solid #7a7a7a; border-radius: 3px; background: #f6f6f6; }
.name { display: flex; align-items: center; gap: 5px; padding-left: 3px; }
.name svg { flex: none; }
.sid { letter-spacing: .9px; }
.picked td { background: #0078d7; color: #fff; border-right-color: #fff; }
.picked .rowchk { background: #fff; }

.hscroll { display: flex; width: 1349px; height: 25px; border-top: 1px solid #d8e0f0; border-bottom: 1px solid #d8e0f0; background: #eef1f6; }
.hbtn { width: 25px; display: flex; align-items: center; justify-content: center; background: #f1f3f8; border: 1px solid #e0e5f0; }
.tl, .tr { width: 0; height: 0; border-top: 6px solid transparent; border-bottom: 6px solid transparent; }
.tl { border-right: 7px solid #666; }
.tr { border-left: 7px solid #666; }
.hthumb { width: 343px; background: #fff; display: flex; align-items: center; justify-content: center; }
.grip { width: 7px; height: 19px; border-left: 1px solid #3a70c0; border-right: 1px solid #3a70c0; background: linear-gradient(90deg, transparent 2.500px, #3a70c0 2.500px, #3a70c0 3.500px, transparent 3.500px); }
.htrack { flex: 1; }

.bottom { height: 352px; margin: 0 3px 0 2px; background: #fff; display: flex; flex-direction: column; overflow: hidden; }
.btm-tabs { height: 34px; padding: 4px 0 0 8px; display: flex; gap: 3px; border-bottom: 1px solid #ccd2e0; flex: none; }
.btm-tab { height: 30px; background: #eef1f7; border: 1px solid #dbe2f0; border-bottom: 0; border-radius: 4px 4px 0 0; text-align: center; font-size: 18.500px; line-height: 26px; color: #444; }
.btm-tab.t1 { width: 88px; }
.btm-tab.t2 { width: 103px; }
.btm-tab.active { background: #fff; color: #2458dc; font-weight: 700; }
.btm-body { flex: 1; min-height: 0; display: flex; }
.summary { flex: 1; padding-left: 9px; overflow: hidden; font-family: "Noto Sans CJK SC", sans-serif; font-size: 18px; color: #333; white-space: nowrap; }
.summary div { height: 24px; line-height: 19px; }
.lat { font-family: "Liberation Mono", monospace; letter-spacing: -1.800px; }
.btm-scroll { width: 33px; background: #f0f0f0; padding: 24px 7px 0; }
.btm-thumb { width: 11px; height: 220px; background: #888; }

.status { height: 34px; flex: none; background: #03419d; border-bottom: 3px solid #0b4fb0; padding-bottom: 1px; display: flex; align-items: center; color: #fff; font-size: 20px; white-space: nowrap; position: relative; }
.st-path { width: 1346px; padding-left: 6px; flex: none; }
.st-count { width: 411px; flex: none; }
.st-index { width: 130px; overflow: hidden; flex: none; }
.st-grip { position: absolute; left: 1903px; top: 17px; width: 11px; height: 11px; }
.st-grip i { position: absolute; width: 3px; height: 3px; background: #c4cede; }
.st-grip i:nth-child(1) { left: 8px; top: 0; }
.st-grip i:nth-child(2) { left: 4px; top: 4px; }
.st-grip i:nth-child(3) { left: 8px; top: 4px; }
.st-grip i:nth-child(4) { left: 0; top: 8px; }
.st-grip i:nth-child(5) { left: 4px; top: 8px; }
.st-grip i:nth-child(6) { left: 8px; top: 8px; }

.scribble { position: absolute; left: 1560px; top: 360px; }
```
